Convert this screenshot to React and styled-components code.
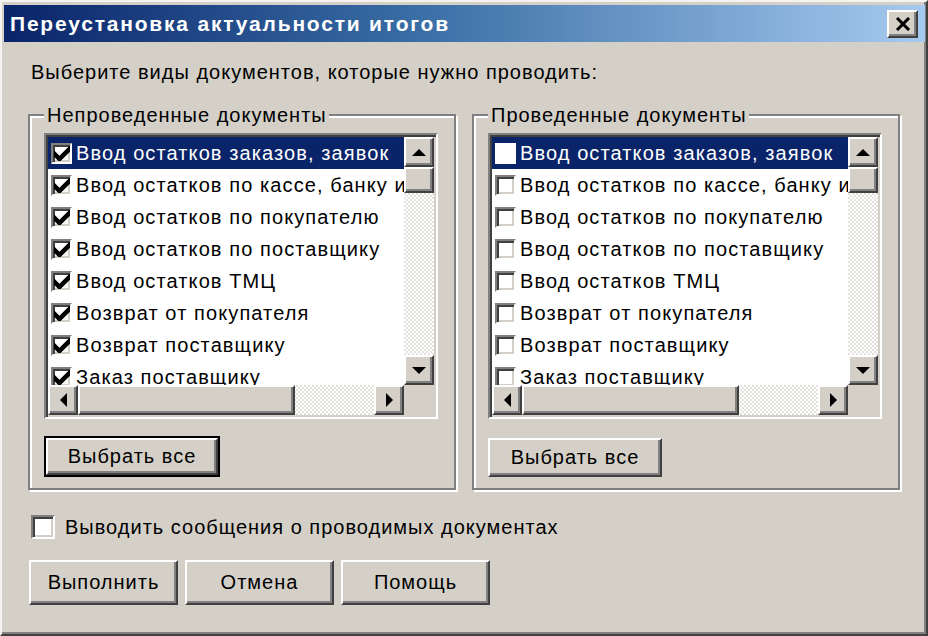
import React from 'react';
import styled, { createGlobalStyle, css } from 'styled-components';

const face = '#d4d0c8';

const GlobalStyle = createGlobalStyle`
    html, body {
        margin: 0;
        padding: 0;
        background: ${face};
    }
    * {
        box-sizing: border-box;
    }
`;

const raised = css`
    border: 2px solid;
    border-color: #ffffff #404040 #404040 #ffffff;
    box-shadow: inset -2px -2px 0 #808080;
    background: ${face};
`;

const sunken = css`
    border: 2px solid;
    border-color: #808080 #ffffff #ffffff #808080;
    box-shadow: inset 2px 2px 0 #404040, inset -2px -2px 0 ${face};
`;

const Window = styled.div`
    width: 928px;
    height: 636px;
    padding: 2px 1px 0 2px;
    border: 2px solid;
    border-color: #f4f3f0 #404040 #404040 #f4f3f0;
    box-shadow: inset -2px -2px 0 #808080;
    background: ${face};
    font-family: "Liberation Sans", Arial, sans-serif;
    letter-spacing: 1px;
    color: #000;
    display: flex;
    flex-direction: column;
`;

const TitleBar = styled.div`
    height: 37px;
    margin-top: 1px;
    padding: 0 7px 0 6px;
    display: flex;
    align-items: center;
    justify-content: space-between;
    background: linear-gradient(90deg, #0a246a 0%, #3a6ea5 45%, #a6caf0 100%);
`;

const Title = styled.span`
    color: #fff;
    font-weight: bold;
    font-size: 21px;
    letter-spacing: 1.8px;
`;

const CloseButton = styled.div`
    ${raised};
    width: 31px;
    height: 28px;
    display: flex;
    align-items: center;
    justify-content: center;
`;

const Body = styled.div`
    flex: 1;
    padding: 18px 25px 0 24px;
    display: flex;
    flex-direction: column;
`;

const Prompt = styled.div`
    font-size: 20px;
    line-height: 24px;
    padding-left: 3px;
`;

const Groups = styled.div`
    margin-top: 19px;
    display: grid;
    grid-template-columns: 1fr 1fr;
    gap: 16px;
`;

const Group = styled.fieldset`
    margin: 0;
    min-width: 0;
    padding: 6px 16px 11px 14px;
    border: 2px solid #808080;
    box-shadow: inset 2px 2px 0 #fff, 2px 2px 0 #fff;
`;

const Legend = styled.legend`
    margin-left: 0;
    padding: 0 2px 0 3px;
    font-size: 20px;
    line-height: 24px;
    background: ${face};
`;

const ListBox = styled.div`
    ${sunken};
    height: 286px;
    padding: 2px;
    display: grid;
    grid-template-columns: minmax(0, 1fr) 30px;
    grid-template-rows: minmax(0, 1fr) 30px;
    background: #fff;
`;

const Items = styled.div`
    overflow: hidden;
`;

const Row = styled.div`
    height: 32px;
    padding-left: 3px;
    display: flex;
    align-items: center;
    gap: 4px;
    white-space: nowrap;
    font-size: 20px;
    letter-spacing: 1.1px;
    background: ${p => (p.$selected ? '#0a246a' : '#fff')};
    color: ${p => (p.$selected ? '#fff' : '#000')};
`;

const Box = styled.span`
    flex: none;
    width: 21px;
    height: 21px;
    display: flex;
    align-items: center;
    justify-content: center;
    background: #fff;
    ${p => (p.$plain ? '' : sunken)};
`;

const VScroll = styled.div`
    display: flex;
    flex-direction: column;
    background: repeating-conic-gradient(#ffffff 0 25%, #e4e2dc 0 50%) 0 0 / 4px 4px;
`;

const HScroll = styled.div`
    display: flex;
    background: repeating-conic-gradient(#ffffff 0 25%, #e4e2dc 0 50%) 0 0 / 4px 4px;
`;

const ScrollButton = styled.div`
    ${raised};
    flex: none;
    width: 30px;
    height: 30px;
    display: flex;
    align-items: center;
    justify-content: center;
`;

const Thumb = styled.div`
    ${raised};
    flex: none;
    width: ${p => p.$w || '30px'};
    height: ${p => p.$h || '30px'};
`;

const Track = styled.div`
    flex: 1;
`;

const Corner = styled.div`
    background: ${face};
`;

const Button = styled.div`
    ${raised};
    width: ${p => p.$w || '150px'};
    height: ${p => p.$h || '45px'};
    display: flex;
    align-items: center;
    justify-content: center;
    font-size: 20px;
    ${p => p.$default && css`
        outline: 2px solid #000;
        outline-offset: 0;
    `}
`;

const SelectAll = styled(Button)`
    margin-top: 19px;
    margin-left: ${p => (p.$default ? '2px' : '0')};
`;

const OptionRow = styled.label`
    margin-top: 25px;
    display: flex;
    align-items: center;
    gap: 10px;
    font-size: 20px;
    padding-left: 3px;
`;

const OptionBox = styled.span`
    ${sunken};
    width: 24px;
    height: 24px;
    background: #fff;
`;

const Actions = styled.div`
    margin-top: 21px;
    padding-left: 1px;
    display: flex;
    gap: 7px;
`;

const Check = () => (
    <svg width="16" height="16" viewBox="0 0 7 7">
        <path d="M0 2.3 L2.4 4.7 L7 0.1 L7 2.9 L2.4 7.5 L0 5.1 Z" fill="#000" />
    </svg>
);

const Arrow = ({ dir }) => {
    const pts = {
        up: '0,7 7,0 14,7',
        down: '0,0 7,7 14,0',
        left: '7,0 0,7 7,14',
        right: '0,0 7,7 0,14',
    }[dir];
    const vertical = dir === 'up' || dir === 'down';
    return (
        <svg width={vertical ? 14 : 7} height={vertical ? 7 : 14} viewBox={vertical ? '0 0 14 7' : '0 0 7 14'}>
            <polygon points={pts} fill="#000" />
        </svg>
    );
};

const documents = [
    'Ввод остатков заказов, заявок',
    'Ввод остатков по кассе, банку и подотчетным лицам',
    'Ввод остатков по покупателю',
    'Ввод остатков по поставщику',
    'Ввод остатков ТМЦ',
    'Возврат от покупателя',
    'Возврат поставщику',
    'Заказ поставщику',
];

const DocList = ({ checked }) => (
    <ListBox>
        <Items>
            {documents.map((name, i) => (
                <Row key={name} $selected={i === 0}>
                    <Box $plain={i === 0 && !checked}>{checked && <Check />}</Box>
                    {name}
                </Row>
            ))}
        </Items>
        <VScroll>
            <ScrollButton><Arrow dir="up" /></ScrollButton>
            <Thumb $h="26px" />
            <Track />
            <ScrollButton><Arrow dir="down" /></ScrollButton>
        </VScroll>
        <HScroll>
            <ScrollButton><Arrow dir="left" /></ScrollButton>
            <Thumb $w="217px" />
            <Track />
            <ScrollButton><Arrow dir="right" /></ScrollButton>
        </HScroll>
        <Corner />
    </ListBox>
);

export default function App() {
    return (
        <>
            <GlobalStyle />
            <Window>
                <TitleBar>
                    <Title>Переустановка актуальности итогов</Title>
                    <CloseButton>
                        <svg width="16" height="14" viewBox="0 0 16 14">
                            <path d="M2 1 L14 13 M14 1 L2 13" stroke="#000" strokeWidth="3" />
                        </svg>
                    </CloseButton>
                </TitleBar>
                <Body>
                    <Prompt>Выберите виды документов, которые нужно проводить:</Prompt>
                    <Groups>
                        <Group>
                            <Legend>Непроведенные документы</Legend>
                            <DocList checked />
                            <SelectAll $default $w="172px" $h="37px">Выбрать все</SelectAll>
                        </Group>
                        <Group>
                            <Legend>Проведенные документы</Legend>
                            <DocList checked={false} />
                            <SelectAll $w="174px" $h="39px">Выбрать все</SelectAll>
                        </Group>
                    </Groups>
                    <OptionRow>
                        <OptionBox />
                        Выводить сообщения о проводимых документах
                    </OptionRow>
                    <Actions>
                        <Button $w="149px">Выполнить</Button>
                        <Button $w="149px">Отмена</Button>
                        <Button $w="149px">Помощь</Button>
                    </Actions>
                </Body>
            </Window>
        </>
    );
}
